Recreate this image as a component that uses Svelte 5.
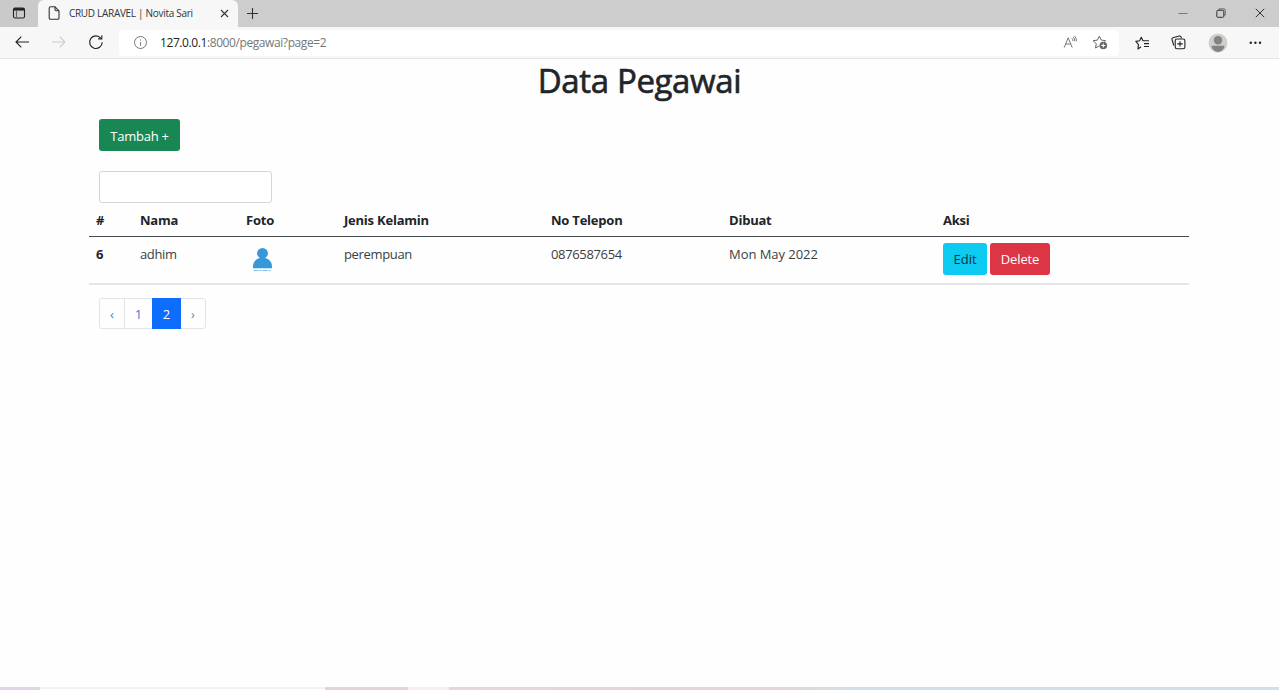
<script>
  const columns = ['#', 'Nama', 'Foto', 'Jenis Kelamin', 'No Telepon', 'Dibuat', 'Aksi'];
  const rows = [{ id: 6, name: 'adhim', gender: 'perempuan', phone: '0876587654', created: 'Mon May 2022' }];
</script>

<div class="window">
  <header class="tabs">
    <div class="workspace">
      <svg width="14" height="14" viewBox="0 0 14 14" fill="none" stroke="#222" stroke-width="1.1"><rect x="1.5" y="2" width="11" height="10" rx="1.6"/><path d="M2 3.3h10" stroke-width="2.5"/><path d="M4.5 4v8" stroke="#666"/></svg>
    </div>
    <div class="tab">
      <svg class="doc" width="12" height="14" viewBox="0 0 12 14" fill="none" stroke="#333" stroke-width="1.1" stroke-linejoin="round"><path d="M2.5.8H7L11 4.8v7.1c0 .8-.5 1.3-1.3 1.3H2.5c-.8 0-1.3-.5-1.3-1.3V2.1c0-.8.5-1.3 1.3-1.3z"/><path d="M7 .8v2.8c0 .8.4 1.2 1.2 1.2H11"/></svg>
      <span class="tabtitle">CRUD LARAVEL | Novita Sari</span>
      <svg class="close" width="9" height="9" viewBox="0 0 9 9" stroke="#333" stroke-width="1.1"><path d="M1 1l7 7M8 1l-7 7"/></svg>
    </div>
    <svg class="plus" width="13" height="13" viewBox="0 0 13 13" stroke="#333" stroke-width="1.1"><path d="M6.5 1v11M1 6.5h11"/></svg>
    <div class="controls">
      <svg width="10" height="10" viewBox="0 0 10 10" stroke="#777"><path d="M.5 5.5h9"/></svg>
      <svg width="10" height="10" viewBox="0 0 10 10" fill="none" stroke="#333"><path d="M3 2V.9h5c.8 0 1.2.4 1.2 1.2v5H8" stroke="#666"/><rect x=".8" y="2.3" width="7" height="7" rx="1"/></svg>
      <svg width="10" height="10" viewBox="0 0 10 10" stroke="#333"><path d="M.8.8l8.4 8.4M9.2.8L.8 9.2"/></svg>
    </div>
  </header>

  <nav class="toolbar">
    <div class="navicons">
      <svg width="14" height="12" viewBox="0 0 14 12" fill="none" stroke="#222" stroke-width="1.1"><path d="M14 6H1M6.3.7L1 6l5.3 5.3"/></svg>
      <svg width="14" height="12" viewBox="0 0 14 12" fill="none" stroke="#ccc" stroke-width="1.1"><path d="M0 6h13M7.7.7L13 6l-5.3 5.3"/></svg>
      <svg width="16" height="16" viewBox="0 0 16 16" fill="none" stroke="#222" stroke-width="1.1"><path d="M14.2 8.2A6.3 6.3 0 1 1 12.8 4.2"/><path d="M13.8 1.2v3.7h-3.7"/></svg>
    </div>
    <div class="address">
      <svg class="info" width="14" height="14" viewBox="0 0 14 14" fill="none" stroke="#777"><circle cx="6.5" cy="6.5" r="6"/><path d="M6.5 6V9.7M6.5 3.4v1.2"/></svg>
      <span class="url"><b>127.0.0.1</b>:8000/pegawai?page=2</span>
      <svg class="read" width="15" height="15" viewBox="0 0 15 15" fill="none" stroke="#777"><path d="M1.2 12.5L5.2 2.8 9.2 12.5M2.7 9h5M8.8 3.2c.8.8 1.1 1.7 1.1 2.8M10.2 2c1 1.2 1.5 2.5 1.4 4.2M11.5.9c1.5 1.7 2 3.4 1.8 5.4"/></svg>
      <svg class="fav" width="16" height="15" viewBox="0 0 16 15" fill="none" stroke="#666" stroke-linejoin="round"><path d="M7 11l-3.5 2 .8-4.3L1.1 5.7l4.3-.6 1.9-3.9 2 3.9 4.3.6-1 1"/><circle cx="11.3" cy="10.5" r="3.8" fill="#666" stroke="none"/><path d="M11.3 8.5v4M9.3 10.5h4" stroke="#fff"/></svg>
    </div>
    <svg class="favs" width="15" height="14" viewBox="0 0 15 14" fill="none" stroke="#222" stroke-width="1.1" stroke-linejoin="round"><path d="M6 10.8L3 13l.4-4.6L.8 5.4l3.9-.7L6.3 1.2 8 4.7h6M9 7.6h5M9 10.5h5"/></svg>
    <svg class="collections" width="15" height="15" viewBox="0 0 15 15" fill="none" stroke="#222" stroke-width="1.1"><path d="M2.8 10.5L1 4.5c-.2-.9.1-1.5.9-1.7L8.2 1c.9-.2 1.5.2 1.8.9l.4 1.3"/><rect x="4.2" y="4" width="9.7" height="9.7" rx="1.8"/><path d="M9 6.2v5.4M6.3 8.9h5.4"/></svg>
    <svg class="avatar" width="20" height="20" viewBox="0 0 20 20"><circle cx="10" cy="10" r="9.4" fill="#d0cecb"/><circle cx="10" cy="7.3" r="4.2" fill="#858381"/><path d="M3.5 13.8c0-.6.5-1 1.2-1h10.6c.7 0 1.2.4 1.2 1-1.2 3.3-3.5 5.1-6.5 5.1s-5.3-1.8-6.5-5.1z" fill="#858381"/></svg>
    <svg class="dots" width="13" height="4" viewBox="0 0 13 4" fill="#222"><circle cx="1.8" cy="1.8" r="1.2"/><circle cx="6.4" cy="1.8" r="1.2"/><circle cx="11" cy="1.8" r="1.2"/></svg>
  </nav>

  <main>
    <h1>Data Pegawai</h1>
    <section class="content">
      <button class="btn add">Tambah +</button>
      <input type="search" aria-label="Nama" />
    </section>
    <table>
      <colgroup><col class="c1" /><col class="c2" /><col class="c3" /><col class="c4" /><col class="c5" /><col class="c6" /><col /></colgroup>
      <thead><tr>{#each columns as column}<th>{column}</th>{/each}</tr></thead>
      <tbody>
        {#each rows as row}
          <tr>
            <th>{row.id}</th>
            <td>{row.name}</td>
            <td><svg class="photo" width="32" height="32" viewBox="0 0 32 32"><circle cx="16.5" cy="9.3" r="5.4" fill="#3797d8"/><path d="M7 24.2v-1.6c0-4.8 3.3-7.7 6.8-8.6h5.4c3.5.9 6.8 3.8 6.8 8.6v1.6z" fill="#3797d8"/><path d="M7.5 26.5h18" stroke="#75bce8" stroke-dasharray="5 1 2 1"/></svg></td>
            <td>{row.gender}</td>
            <td>{row.phone}</td>
            <td class="date">{row.created}</td>
            <td class="actions"><div><button class="btn edit">Edit</button><button class="btn delete">Delete</button></div></td>
          </tr>
        {/each}
      </tbody>
    </table>
    <ul class="pages">
      <li class="prev">‹</li><li class="one">1</li><li class="active">2</li><li class="next">›</li>
    </ul>
  </main>
  <footer><i class="lilac"></i><i class="light"></i><i class="pink"></i><i class="pale"></i><i class="fade"></i></footer>
</div>

<style>
  :global(body) { margin: 0; overflow: hidden; }
  * { box-sizing: border-box; }
  svg { display: block; flex: none; }
  .window { width: 1279px; height: 690px; background: #fefefe; display: flex; flex-direction: column; font: 13px/21px "Open Sans", "Noto Sans", sans-serif; color: #212529; }
  .tabs { height: 27px; background: #cdcdcd; display: flex; align-items: center; flex: none; }
  .workspace { width: 38px; height: 27px; padding: 6px 0 0 12px; background: #cacaca; border-bottom-right-radius: 4px; }
  .tab { width: 200px; height: 27px; background: #f7f7f7; border-radius: 6px 6px 0 0; display: flex; align-items: center; padding-left: 10px; }
  .doc { margin-top: -1px; }
  .tabtitle { font-size: 10px; letter-spacing: -.3px; white-space: nowrap; margin-left: 9px; width: 151px; color: #333; }
  .plus { margin-left: 8px; margin-top: -1px; }
  .controls { margin: -1px 14px 0 auto; display: flex; gap: 28px; }
  .controls svg:nth-child(-n+2) { margin-left: -1px; margin-right: 1px; }
  .toolbar { height: 32px; background: #f7f7f7; border-bottom: 1px solid #e5e5e5; display: flex; align-items: center; flex: none; }
  .navicons { display: flex; align-items: center; gap: 23px; width: 119px; padding-left: 15px; flex: none; margin-top: -1px; }
  .navicons svg:last-child { margin-left: -1px; }
  .address { width: 1000px; height: 26px; background: #fff; border-radius: 4px; display: flex; align-items: center; padding-left: 15px; flex: none; }
  .url { font-size: 12px; letter-spacing: -.41px; color: #777; margin-left: 12px; }
  .url b { color: #222; font-weight: 400; }
  .read { margin-left: auto; }
  .fav { margin-left: 14px; margin-right: 11px; }
  .favs { margin-left: 16px; }
  .collections { margin-left: 21px; }
  .avatar { margin-left: 22px; }
  .dots { margin-left: 21px; }
  main { flex: 1; min-height: 0; }
  h1 { font-size: 33px; line-height: 40px; letter-spacing: -.35px; margin: 2px 0 0; font-weight: 400; -webkit-text-stroke: .65px #212529; text-align: center; }
  .content { padding: 18px 0 0 99px; display: flex; flex-direction: column; align-items: flex-start; }
  .btn { border: 0; border-radius: 3px; font: inherit; height: 32px; padding: 1px 0 0; text-align: center; white-space: nowrap; }
  .add { width: 81px; color: #fff; background: #198754; letter-spacing: -.25px; padding-top: 2px; }
  input { width: 173px; height: 32px; margin: 20px 0 0; border: 1px solid #d2d5d9; border-radius: 3px; background: #fff; }
  table { width: 1100px; margin-left: 89px; table-layout: fixed; border-collapse: separate; border-spacing: 0; }
  th, td { text-align: left; vertical-align: top; padding: 7px 0 0 7px; white-space: nowrap; }
  thead th { height: 34px; border-bottom: 1px solid #45494d; letter-spacing: -.22px; }
  tbody th, tbody td { height: 48px; border-bottom: 2px solid #e4e5e6; }
  td { color: #3b3f43; letter-spacing: -.35px; }
  td.date { letter-spacing: -.05px; }
  tbody td.actions { letter-spacing: 0; padding-top: 6px; }
  .c1 { width: 44px; } .c2 { width: 106px; } .c3 { width: 98px; } .c4 { width: 207px; } .c5 { width: 178px; } .c6 { width: 214px; }
  .actions div { display: flex; gap: 3px; }
  .edit { width: 44px; background: #0dcaf0; color: #16313a; }
  .delete { width: 60px; background: #dc3545; color: #fff; letter-spacing: -.15px; }
  .pages { list-style: none; display: flex; margin: 13px 0 0 99px; padding: 0; width: 107px; height: 31px; border: 1px solid #e2e5e8; border-radius: 3px; color: #4679d5; }
  .pages li { text-align: center; line-height: 31px; }
  .prev { width: 24px; } .one { width: 28px; border-left: 1px solid #e2e5e8; }
  .pages .active { width: 29px; margin: -1px 0; line-height: 33px; background: #0d6efd; color: #fff; }
  .next { width: 24px; color: #7c8288; }
  footer { height: 3px; display: flex; flex: none; }
  .lilac { width: 40px; background: #e2d5e5; } .light { width: 285px; border-top: 2px solid #f2f2f2; } .pink { width: 83px; background: #e5d4dc; } .pale { width: 41px; background: #f6eef1; }
  .fade { flex: 1; background: linear-gradient(90deg, #e7d6de 0, #e3d4e1 25%, #e5d5dd 40%, #d1dfe6 49%, #d1dfe6 100%); }
</style>
